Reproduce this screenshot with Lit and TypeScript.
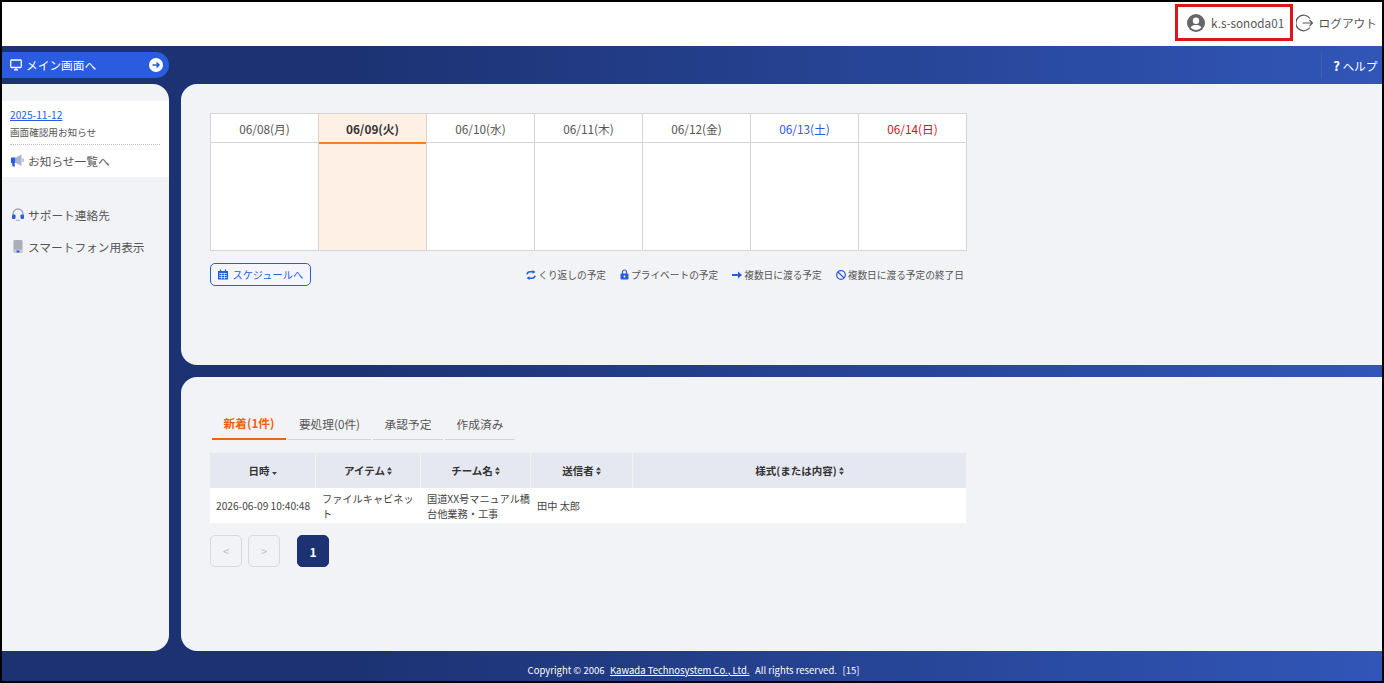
import { LitElement, html, css, svg } from "lit";
import { customElement } from "lit/decorators.js";

const days = [
  { t: "06/08(月)", c: "" },
  { t: "06/09(火)", c: "today" },
  { t: "06/10(水)", c: "" },
  { t: "06/11(木)", c: "" },
  { t: "06/12(金)", c: "" },
  { t: "06/13(土)", c: "sat" },
  { t: "06/14(日)", c: "sun" },
];

const sort = svg`<svg class="sort" width="5" height="8" viewBox="0 0 5 8"><path d="M2.500 0 5 3.200H0zM2.500 8 0 4.800H5z" fill="#444"/></svg>`;
const sortDown = svg`<svg class="sort" width="5" height="3" viewBox="0 0 5 3"><path d="M0 0H5L2.500 3z" fill="#444"/></svg>`;

@customElement("app-root")
export class AppRoot extends LitElement {
  static styles = css`
    :host { display: block; width: 1384px; height: 683px; font-family: "Noto Sans CJK JP", "Noto Sans", sans-serif; color: #444; overflow: hidden; }
    * { box-sizing: border-box; }
    a { color: inherit; }
    .frame { width: 1384px; height: 683px; border: 2px solid #000; display: flex; flex-direction: column; background: linear-gradient(90deg, #1c3272 0%, #1c3272 25%, #3156b8 100%); }
    .top { height: 44px; background: #fff; display: flex; justify-content: flex-end; align-items: center; flex: none; }
    .user { width: 118px; height: 37px; border: 3px solid #e0141c; display: flex; align-items: center; gap: 6px; padding-left: 9px; font-size: 11.7px; color: #555; margin-top: -3px; white-space: nowrap; }
    .logout { display: flex; align-items: center; gap: 6px; font-size: 11.7px; color: #555; margin: -3px 5px 0 2.500px; }
    .band { height: 38px; display: flex; justify-content: space-between; flex: none; }
    .main-link { width: 167px; height: 26px; margin-top: 6px; background: #2b5ce0; border-radius: 0 13px 13px 0; color: #fff; font-size: 11.7px; display: flex; align-items: center; padding: 0 6px 0 8px; gap: 4px; }
    .main-link span { flex: 1; padding-bottom: 1px; }
    .help { height: 26px; margin-top: 6px; border-left: 1px solid #3f5fb5; display: flex; align-items: center; gap: 2.500px; padding: 0 4.500px 0 11px; color: #fff; font-size: 11.7px; }
    .help b { font-size: 13px; }
    .body { flex: 1; display: flex; gap: 12px; min-height: 0; }
    .side { width: 167px; background: #f2f3f7; border-radius: 0 16px 16px 0; padding-top: 17px; flex: none; color: #555; }
    .notice { background: #fff; height: 76px; padding: 7px 8px 0; }
    .date { font-size: 10.2px; color: #2b5ce0; line-height: 14px; display: block; }
    .ntext { font-size: 9.6px; line-height: 14px; margin-top: 3px; padding-bottom: 5px; border-bottom: 1px dotted #bbb; margin-right: 1px; }
    .row { display: flex; align-items: center; gap: 4px; height: 18px; font-size: 11.7px; padding-bottom: 1px; }
    .row span { margin-top: -1px; }
    .notice .row { margin-top: 7px; padding-left: 1px; }
    .side .links { padding: 29px 0 0 10px; display: flex; flex-direction: column; gap: 14px; }
    .panels { flex: 1; display: flex; flex-direction: column; gap: 12px; min-width: 0; }
    .panel { background: #f2f3f7; border-radius: 16px 0 0 16px; flex: none; padding-left: 29px; }
    .p1 { height: 281px; padding-top: 29px; }
    .p2 { height: 274px; padding-top: 34px; }
    .cal { width: 757px; height: 138px; border: 1px solid #d5d5d5; background: #fff; display: grid; grid-template-columns: repeat(6, 108px) 1fr; }
    .day { display: flex; flex-direction: column; border-right: 1px solid #d5d5d5; }
    .day:last-child { border-right: 0; }
    .dh { height: 29px; border-bottom: 1px solid #d5d5d5; font-size: 11.8px; color: #555; display: flex; align-items: center; justify-content: center; flex: none; }
    .db { flex: 1; }
    .today { background: #fef0e5; }
    .today .dh { font-weight: 700; color: #333; border-bottom: 2px solid #fb7d2b; height: 30px; }
    .sat .dh { color: #2b5ce0; }
    .sun .dh { color: #d8101c; }
    .tools { width: 757px; display: flex; justify-content: space-between; align-items: center; margin-top: 12px; }
    .sched { width: 101px; height: 23px; border: 1px solid #2b5ce0; border-radius: 5px; background: #f5f6fb; color: #2b5ce0; font-size: 10.2px; display: flex; align-items: center; padding-left: 7px; gap: 4.500px; white-space: nowrap; }
    .legend { display: flex; gap: 14px; font-size: 9.7px; color: #555; padding-right: 3px; white-space: nowrap; }
    .legend div { display: flex; align-items: center; gap: 2px; }
    .tabs { display: flex; gap: 2px; width: 305px; padding-left: 2px; }
    .tab { height: 29px; font-size: 11.7px; color: #555; display: flex; align-items: center; justify-content: center; border-bottom: 1px solid #d5d5d5; padding-bottom: 4px; flex: none; }
    .tab.on { color: #f4600e; font-weight: 700; border-bottom: 2px solid #f4600e; }
    .w74 { width: 74px; }
    .w83 { width: 83px; }
    .w70 { width: 70px; }
    table { border-collapse: separate; border-spacing: 0; table-layout: fixed; width: 756px; margin-top: 13px; font-size: 10.2px; color: #444; }
    .c1, .c2 { width: 105px; }
    .c3 { width: 110px; }
    .c4 { width: 102px; }
    .c5 { width: 334px; }
    th { height: 35px; background: #e6e8f1; font-size: 10.5px; font-weight: 700; color: #333; border-left: 1.500px solid #f2f3f7; padding: 0; }
    th:first-child { border-left: 0; }
    .sort { margin-left: 2px; }
    td { height: 35px; background: #fff; padding: 0 0 0 7px; line-height: 15px; white-space: nowrap; }
    td:first-child { padding-left: 6px; }
    .pager { display: flex; margin-top: 12px; gap: 6px; }
    .pg { width: 32px; height: 32px; border: 1px solid #d8d9dd; border-radius: 5px; color: #bbb; font-size: 11px; display: flex; align-items: center; justify-content: center; }
    .pg.cur { background: #1c3272; border-color: #1c3272; color: #fff; font-weight: 700; font-size: 12px; margin-left: 11px; }
    .foot { height: 30px; flex: none; color: #fff; font-size: 9.5px; display: flex; align-items: center; justify-content: center; padding: 7px 0 0 3px; gap: 5.500px; white-space: nowrap; }
  `;

  render() {
    return html`<div class="frame">
      <div class="top">
        <div class="user">
          <svg width="18" height="18" viewBox="0 0 18 18"><circle cx="9" cy="9" r="9" fill="#666"/><circle cx="9" cy="6.800" r="3.200" fill="#fff"/><path d="M3.600 13.600C4.800 11.600 6.800 11 9 11s4.200.6 5.400 2.600A7 7 0 0 1 9 16a7 7 0 0 1-5.400-2.400z" fill="#fff"/></svg>
          k.s-sonoda01
        </div>
        <div class="logout">
          <svg width="17" height="18" viewBox="0 0 17 18" fill="none" stroke="#555" stroke-width="1.200"><path d="M14 4.500A7.800 7.800 0 1 0 14 13.500"/><path d="M6.500 9H16.500M13.500 6l3 3-3 3"/></svg>
          ログアウト
        </div>
      </div>
      <div class="band">
        <div class="main-link">
          <svg width="12" height="12" viewBox="0 0 12 12" fill="none" stroke="#fff" stroke-width="1.300"><rect x=".7" y="1" width="10.600" height="7.500" rx="1"/><path d="M4 10.800H8M6 8.500V10.800"/></svg>
          <span>メイン画面へ</span>
          <svg width="14" height="14" viewBox="0 0 14 14"><circle cx="7" cy="7" r="7" fill="#fff"/><path d="M3.500 7H10M7.500 4.500 10 7 7.500 9.500" fill="none" stroke="#2b5ce0" stroke-width="1.500"/></svg>
        </div>
        <div class="help"><b>?</b>ヘルプ</div>
      </div>
      <div class="body">
        <div class="side">
          <div class="notice">
            <a class="date" href="#">2025-11-12</a>
            <div class="ntext">画面確認用お知らせ</div>
            <div class="row">
              <svg width="13" height="13" viewBox="0 0 13 13"><path d="M0 3.500H4.500V9H3.500L4 12.500H1.500L1 9H0z" fill="#2b5ce0"/><path d="M5 3.500 10.500 .5V12L5 9z" fill="#a9b4cc"/><rect x="11" y="4.500" width="2" height="3.500" fill="#c4cad8"/></svg>
              <span>お知らせ一覧へ</span>
            </div>
          </div>
          <div class="links">
            <div class="row">
              <svg width="12" height="13" viewBox="0 0 12 13"><path d="M1 7.500V6a5 5 0 0 1 10 0V7.500" fill="none" stroke="#9aa5bd" stroke-width="1.300"/><rect x="0" y="6.500" width="3.500" height="4.500" rx="1" fill="#2b5ce0"/><rect x="8.500" y="6.500" width="3.500" height="4.500" rx="1" fill="#2b5ce0"/><path d="M4 12.300H8" stroke="#9aa5bd"/></svg>
              <span>サポート連絡先</span>
            </div>
            <div class="row">
              <svg width="12" height="13" viewBox="0 0 12 13"><rect x="1.500" y="0" width="9" height="13" rx="1.200" fill="#a9aeb8"/><rect x="1.500" y="9.500" width="9" height="3.500" rx="1" fill="#c9cdd6"/><rect x="4.500" y="10.500" width="3" height="2" fill="#2b5ce0"/></svg>
              <span>スマートフォン用表示</span>
            </div>
          </div>
        </div>
        <div class="panels">
          <div class="panel p1">
            <div class="cal">
              ${days.map((d) => html`<div class="day ${d.c}"><div class="dh">${d.t}</div><div class="db"></div></div>`)}
            </div>
            <div class="tools">
              <div class="sched">
                <svg width="10" height="11" viewBox="0 0 10 11"><path d="M0 2h10v8.500H0z" fill="#2b5ce0"/><path d="M2.500 .5v2M7.500 .5v2" stroke="#2b5ce0" stroke-width="1.200"/><path d="M1 4.500h8M1 6.500h8M1 8.500h8M3.500 4v6M6.500 4v6" stroke="#fff" stroke-width=".6"/></svg>
                スケジュールへ
              </div>
              <div class="legend">
                <div><svg width="10" height="10" viewBox="0 0 10 10"><path d="M1 4.300C1.300 2.600 2.700 1.700 4.200 1.700H7" fill="none" stroke="#2b5ce0" stroke-width="1.500"/><path d="M6.500 0 9.500 1.900 6.500 3.800z" fill="#2b5ce0"/><path d="M9 5.700C8.700 7.400 7.300 8.300 5.800 8.300H3" fill="none" stroke="#2b5ce0" stroke-width="1.500"/><path d="M3.500 10 .5 8.100 3.500 6.200z" fill="#2b5ce0"/></svg>くり返しの予定</div>
                <div><svg width="9" height="11" viewBox="0 0 9 11"><rect x=".5" y="4.500" width="8" height="6" rx="1" fill="#2b5ce0"/><path d="M2.500 5V3a2 2 0 0 1 4 0V5" fill="none" stroke="#2b5ce0" stroke-width="1.200"/><circle cx="4.500" cy="7.500" r=".9" fill="#fff"/></svg>プライベートの予定</div>
                <div><svg width="10" height="8" viewBox="0 0 10 8"><path d="M0 3H6V.5L10 4 6 7.500V5H0z" fill="#2b5ce0"/></svg>複数日に渡る予定</div>
                <div><svg width="10" height="10" viewBox="0 0 10 10" fill="none" stroke="#2b5ce0" stroke-width="1.300"><circle cx="5" cy="5" r="4.300"/><path d="M2 2 8 8"/></svg>複数日に渡る予定の終了日</div>
              </div>
            </div>
          </div>
          <div class="panel p2">
            <div class="tabs">
              <div class="tab on w74">新着(1件)</div>
              <div class="tab w83">要処理(0件)</div>
              <div class="tab w70">承認予定</div>
              <div class="tab w70">作成済み</div>
            </div>
            <table>
              <colgroup><col class="c1"/><col class="c2"/><col class="c3"/><col class="c4"/><col class="c5"/></colgroup>
              <thead><tr>
                <th>日時${sortDown}</th><th>アイテム${sort}</th><th>チーム名${sort}</th><th>送信者${sort}</th><th>様式(または内容)${sort}</th>
              </tr></thead>
              <tbody><tr>
                <td>2026-06-09 10:40:48</td><td>ファイルキャビネッ<br/>ト</td><td>国道XX号マニュアル橋<br/>台他業務・工事</td><td>田中 太郎</td><td></td>
              </tr></tbody>
            </table>
            <div class="pager">
              <div class="pg">&lt;</div><div class="pg">&gt;</div><div class="pg cur">1</div>
            </div>
          </div>
        </div>
      </div>
      <div class="foot"><span>Copyright © 2006</span><a href="#">Kawada Technosystem Co., Ltd.</a><span>All rights reserved.</span><span>[15]</span></div>
    </div>`;
  }
}
